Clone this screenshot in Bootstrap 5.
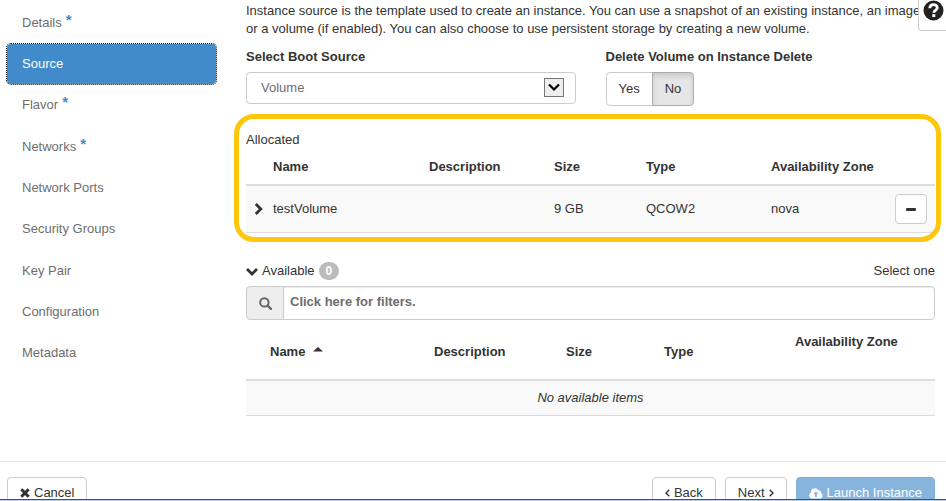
<!DOCTYPE html>
<html lang="en">
<head>
<meta charset="utf-8">
<meta name="viewport" content="width=device-width, initial-scale=1">
<title>Launch Instance - Source</title>
<link href="https://cdn.jsdelivr.net/npm/bootstrap@5.3.0/dist/css/bootstrap.min.css" rel="stylesheet">
<style>
body { font: 13px/18px "Liberation Sans", Arial, sans-serif; color: #333; height: 100vh; }
svg { display: block; fill: currentColor; }
.wizard-body { min-height: 461px; }
.steps { width: 217px; padding: 3px 1px 0 7px; }
.steps ul { height: 370px; gap: 2px; }
.steps .nav-link { color: #6e6e6e; padding: 0 15px; border-radius: 4px; }
.steps .nav-link.active { color: #fff; background: #428bca; outline: 1px dotted #000; border-radius: 4px; }
.steps sup { color: #428bca; font-size: 15px; font-weight: 700; line-height: 0; top: -2px; margin-left: 4px; }
.panel-main { margin-left: 29px; padding: 2px 11px 0 0; }
.form-row { --bs-gutter-x: 30px; margin-top: 10px; }
.form-row label, .form-row legend { font-size: 13px; line-height: 18px; font-weight: 700; margin: 0 0 6px; float: none; }
.source-select { appearance: none; height: 32px; border: 1px solid #ccc; border-radius: 4px; padding: 0 14px; color: #6e6e6e; background: #fff; }
.select-arrow { right: 12px; top: 6px; width: 20px; height: 19px; border: 1px solid #777; background: #eee; pointer-events: none; }
.btn { --bs-btn-font-size: 13px; --bs-btn-line-height: 18px; --bs-btn-border-radius: 4px; --bs-btn-color: #333; --bs-btn-bg: #fff; --bs-btn-border-color: #ccc; --bs-btn-padding-y: 7px; --bs-btn-padding-x: 12px; --bs-btn-active-color: #333; --bs-btn-active-bg: #e6e6e6; --bs-btn-active-border-color: #adadad; }
.btn.active { box-shadow: inset 0 3px 5px rgba(0,0,0,.125); }
.allocated-box { position: relative; margin: 8px -6px 0 -12px; padding: 17px 6px 9px 12px; }
.allocated-box::after { content: ""; position: absolute; inset: 0; border: 5px solid #ffc60b; border-radius: 20px; pointer-events: none; }
.list-table { table-layout: fixed; margin: 0; --bs-table-color: #333; --bs-table-bg: transparent; }
.list-table th, .list-table td { padding: 8px; color: #333; vertical-align: middle; border-bottom: 1px solid #ddd; }
.list-table thead th { border-bottom: 2px solid #ddd; white-space: nowrap; }
.list-table tbody td { background: #f9f9f9; }
.allocated-table thead th { height: 36px; }
.allocated-table tbody td { height: 47px; }
.expander { padding: 0; border: 0; background: none; color: inherit; }
.btn-remove { --bs-btn-padding-x: 10px; --bs-btn-padding-y: 0px; height: 30px; width: 32px; }
.available-bar { margin-top: 18px; min-height: 22px; }
.counter { background: #bbb; font-size: 12px; line-height: 12px; padding: 3px 7px; border-radius: 10px; }
.filter-group { margin-top: 4px; margin-bottom: 5px; }
.filter-group .input-group-text { width: 38px; background: #eee; border-color: #ccc; color: #666; border-radius: 4px; }
.filter-group .form-control { height: 34px; padding: 0 6px 4px; border-color: #ccc; border-radius: 4px; font-size: 13px; box-shadow: inset 0 1px 1px rgba(0,0,0,.075); }
.filter-group .form-control::placeholder { color: #6e6e6e; font-weight: 700; opacity: 1; }
.available-table thead th { height: 55px; }
.available-table .name-head { padding-left: 24px; }
.available-table tbody td { height: 35px; }
.wizard-footer { border-top: 1px solid #e5e5e5; padding: 15px 11px 15px 7px; gap: 9px; }
.wizard-footer .btn { --bs-btn-padding-y: 6px; }
.btn-launch { --bs-btn-disabled-color: #fff; --bs-btn-disabled-bg: #86b4dd; --bs-btn-disabled-border-color: #7fb0da; --bs-btn-disabled-opacity: 1; }
.help-button { right: 0; top: 0; width: 28px; height: 31px; border: 1px solid #ccc; border-width: 0 0 1px 1px; border-radius: 0 0 0 4px; background: #fff; color: #222; padding: 0 0 9px 4px; overflow: hidden; }
.window-edge { height: 2px; background: #b9d1e8; border-top: 1px solid #40536a; }
</style>
<script src="https://cdn.jsdelivr.net/npm/bootstrap@5.3.0/dist/js/bootstrap.bundle.min.js" defer></script>
</head>
<body class="bg-white overflow-hidden position-relative">
<div class="wizard-body d-flex">
  <nav class="steps flex-shrink-0" aria-label="Steps">
    <ul class="nav nav-pills flex-column flex-nowrap">
      <li class="flex-fill d-flex"><a class="nav-link w-100 d-flex align-items-center" href="#"><span>Details<sup>*</sup></span></a></li>
      <li class="flex-fill d-flex"><a class="nav-link active w-100 d-flex align-items-center" href="#" aria-current="step">Source</a></li>
      <li class="flex-fill d-flex"><a class="nav-link w-100 d-flex align-items-center" href="#"><span>Flavor<sup>*</sup></span></a></li>
      <li class="flex-fill d-flex"><a class="nav-link w-100 d-flex align-items-center" href="#"><span>Networks<sup>*</sup></span></a></li>
      <li class="flex-fill d-flex"><a class="nav-link w-100 d-flex align-items-center" href="#">Network Ports</a></li>
      <li class="flex-fill d-flex"><a class="nav-link w-100 d-flex align-items-center" href="#">Security Groups</a></li>
      <li class="flex-fill d-flex"><a class="nav-link w-100 d-flex align-items-center" href="#">Key Pair</a></li>
      <li class="flex-fill d-flex"><a class="nav-link w-100 d-flex align-items-center" href="#">Configuration</a></li>
      <li class="flex-fill d-flex"><a class="nav-link w-100 d-flex align-items-center" href="#">Metadata</a></li>
    </ul>
  </nav>
  <main class="panel-main flex-grow-1">
    <p class="m-0">Instance source is the template used to create an instance. You can use a snapshot of an existing instance, an image, or a volume (if enabled). You can also choose to use persistent storage by creating a new volume.</p>
    <div class="row form-row">
      <div class="col-6">
        <label class="d-block" for="boot-source">Select Boot Source</label>
        <div class="position-relative">
          <select id="boot-source" class="source-select w-100"><option>Volume</option></select>
          <span class="select-arrow position-absolute d-flex align-items-center justify-content-center"><svg width="12" height="9" viewBox="0 0 12 9"><path d="M1 1.5l5 5 5-5" fill="none" stroke="#000" stroke-width="2.2"/></svg></span>
        </div>
      </div>
      <fieldset class="col-6">
        <legend>Delete Volume on Instance Delete</legend>
        <div class="btn-group">
          <button type="button" class="btn" aria-pressed="false">Yes</button>
          <button type="button" class="btn active" aria-pressed="true">No</button>
        </div>
      </fieldset>
    </div>
    <section class="allocated-box">
      <div>Allocated</div>
      <table class="table list-table allocated-table">
        <colgroup><col style="width:19px"><col style="width:156px"><col style="width:125px"><col style="width:92px"><col style="width:125px"><col style="width:124px"><col style="width:48px"></colgroup>
        <thead><tr><th></th><th scope="col">Name</th><th scope="col">Description</th><th scope="col">Size</th><th scope="col">Type</th><th scope="col">Availability Zone</th><th></th></tr></thead>
        <tbody><tr>
          <td class="pe-0"><button type="button" class="expander d-block" aria-label="Expand testVolume"><svg width="10" height="12" viewBox="0 0 10 12"><path d="M1.8 1l5 5-5 5" fill="none" stroke="currentColor" stroke-width="2.8"/></svg></button></td>
          <td>testVolume</td><td></td><td>9 GB</td><td>QCOW2</td><td>nova</td>
          <td><button type="button" class="btn btn-remove d-flex align-items-center justify-content-center" aria-label="Remove testVolume"><svg width="10" height="3" viewBox="0 0 10 3"><rect width="10" height="3" rx="1"/></svg></button></td>
        </tr></tbody>
      </table>
    </section>
    <div class="available-bar d-flex justify-content-between align-items-center">
      <div class="d-flex align-items-center">
        <button type="button" class="expander d-flex align-items-center"><svg class="me-1" width="12" height="9" viewBox="0 0 12 9"><path d="M1 2l5 5 5-5" fill="none" stroke="currentColor" stroke-width="2.8"/></svg>Available</button>
        <span class="badge counter ms-1">0</span>
      </div>
      <span>Select one</span>
    </div>
    <div class="input-group filter-group">
      <label class="input-group-text justify-content-center p-0" for="filter" aria-label="Filter"><svg width="13" height="13" viewBox="0 0 13 13"><g fill="none" stroke="currentColor" stroke-width="2"><circle cx="5.4" cy="5.4" r="4.2"/><path d="M8.5 8.5l3.4 3.4" stroke-width="2.4" stroke-linecap="round"/></g></svg></label>
      <input id="filter" type="text" class="form-control" placeholder="Click here for filters.">
    </div>
    <table class="table list-table available-table">
      <colgroup><col style="width:180px"><col style="width:132px"><col style="width:98px"><col style="width:131px"><col style="width:148px"></colgroup>
      <thead><tr><th scope="col" class="name-head" aria-sort="ascending"><span class="d-flex">Name <svg class="ms-2 mt-1" width="10" height="5" viewBox="0 0 10 5"><path d="M0 4.5L5 0l5 4.5z"/></svg></span></th><th scope="col">Description</th><th scope="col">Size</th><th scope="col">Type</th><th scope="col" class="align-top">Availability Zone</th></tr></thead>
      <tbody><tr><td colspan="5" class="text-center fst-italic">No available items</td></tr></tbody>
    </table>
  </main>
</div>
<footer class="wizard-footer d-flex">
  <button type="button" class="btn d-flex align-items-center me-auto"><svg class="me-1" width="10" height="10" viewBox="0 0 10 10"><path d="M1.3 1.3l7.4 7.4M8.7 1.3L1.3 8.7" stroke="currentColor" stroke-width="3"/></svg>Cancel</button>
  <button type="button" class="btn d-flex align-items-center"><svg class="me-1" width="5" height="8" viewBox="0 0 5 8"><path d="M4.3.7L1 4l3.3 3.3" fill="none" stroke="currentColor" stroke-width="1.4"/></svg>Back</button>
  <button type="button" class="btn d-flex align-items-center">Next<svg class="ms-1" width="5" height="8" viewBox="0 0 5 8"><path d="M.7.7L4 4 .7 7.3" fill="none" stroke="currentColor" stroke-width="1.4"/></svg></button>
  <button type="button" class="btn btn-launch d-flex align-items-center" disabled><svg class="me-1" width="14" height="11" viewBox="0 0 14 11"><path fill-rule="evenodd" d="M3.2 10.5A3.1 3.1 0 0 1 1.8 4.7 4.1 4.1 0 0 1 9.4 2.3 2.3 2.3 0 0 1 12 5 2.9 2.9 0 0 1 11 10.500zM6 9h1.800V6.300h1.700L6.900 3.500 4.300 6.300H6z"/></svg>Launch Instance</button>
</footer>
<button type="button" class="help-button position-absolute d-flex align-items-center" aria-label="Help"><svg class="flex-shrink-0" width="21" height="21" viewBox="0 0 21 21"><circle cx="10.5" cy="10.5" r="10"/><path d="M6.8 8.300C7 3.400 14.200 3.600 14.200 7.700c0 2.600-3.400 2.700-3.400 5" fill="none" stroke="#fff" stroke-width="2.800"/><rect x="9.300" y="14.200" width="3" height="2.800" fill="#fff"/></svg></button>
<div class="window-edge fixed-bottom"></div>
</body>
</html>
